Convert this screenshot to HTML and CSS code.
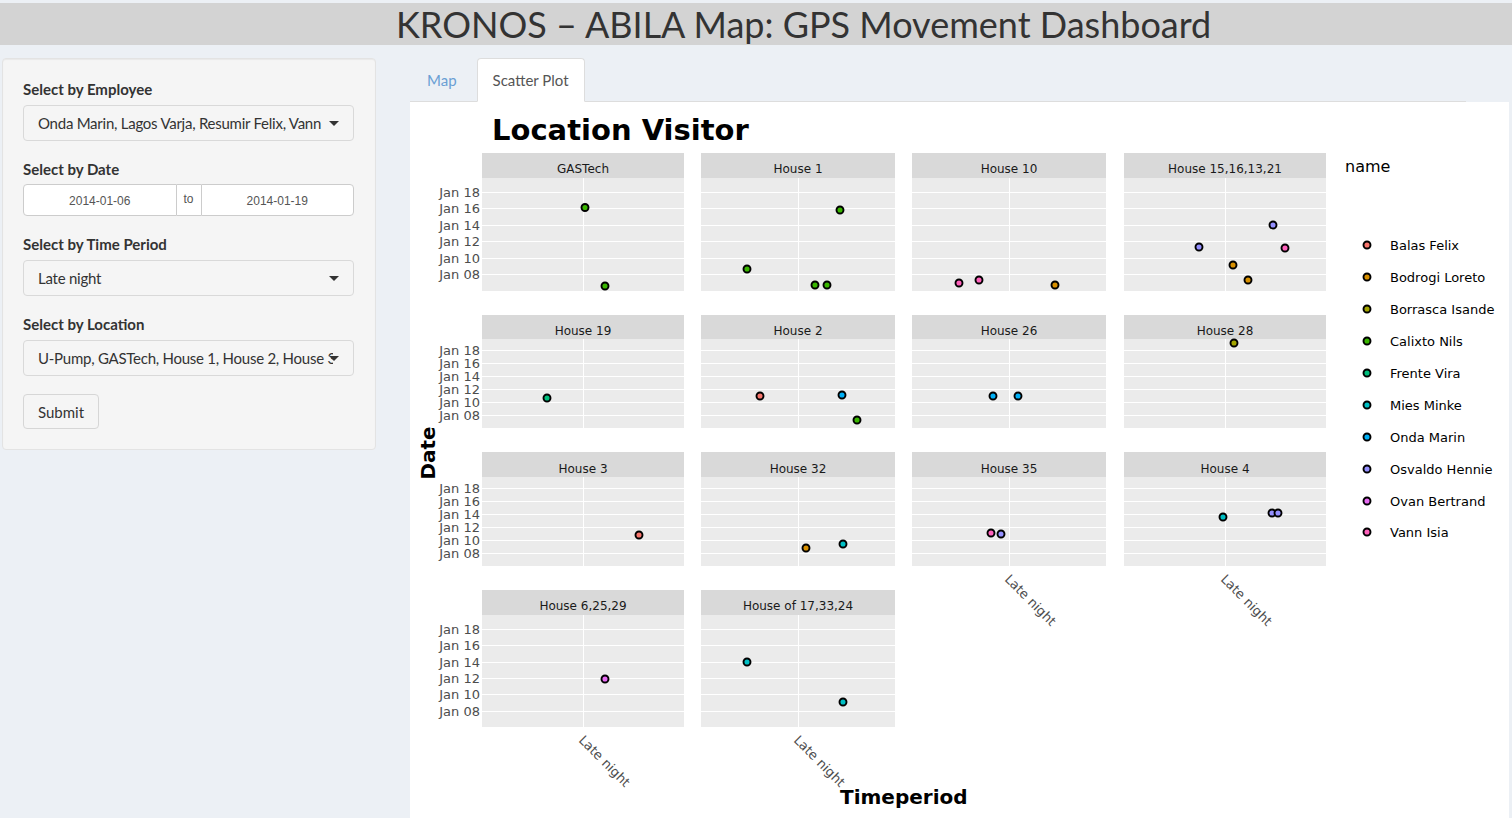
FILE: index.html
```html
<!DOCTYPE html>
<html>
  <head>
    <title>KRONOS – ABILA Map</title>
    <link rel="stylesheet" href="styles.css">
  </head>
  <body>
    <header class="title-bar">
      <h1>KRONOS – ABILA Map: GPS Movement Dashboard</h1>
    </header>

    <div class="layout">
      <aside class="sidebar">
        <div class="field">
          <label>Select by Employee</label>
          <div class="select"><span class="value">Onda Marin, Lagos Varja, Resumir Felix, Vann</span><span class="caret"></span></div>
        </div>
        <div class="field">
          <label class="tight">Select by Date</label>
          <div class="daterange">
            <div class="date first">2014-01-06</div>
            <div class="to">to</div>
            <div class="date last">2014-01-19</div>
          </div>
        </div>
        <div class="field">
          <label>Select by Time Period</label>
          <div class="select"><span class="value">Late night</span><span class="caret"></span></div>
        </div>
        <div class="field">
          <label>Select by Location</label>
          <div class="select"><span class="value">U-Pump, GASTech, House 1, House 2, House 3</span><span class="caret"></span></div>
        </div>
        <button class="submit">Submit</button>
      </aside>

      <main class="main">
        <ul class="tabs">
          <li><a href="#">Map</a></li>
          <li class="active"><a href="#">Scatter Plot</a></li>
        </ul>
        <div class="plot">
          <svg class="chart" width="1099" height="716" viewBox="410 102 1099 716">
            <text class="chart-title" x="492" y="140">Location Visitor</text>

            <!-- facet strips -->
            <g class="strip">
              <rect x="482" y="153" width="202" height="25"/>
              <rect x="701" y="153" width="194" height="25"/>
              <rect x="912" y="153" width="194" height="25"/>
              <rect x="1124" y="153" width="202" height="25"/>
              <rect x="482" y="315" width="202" height="24"/>
              <rect x="701" y="315" width="194" height="24"/>
              <rect x="912" y="315" width="194" height="24"/>
              <rect x="1124" y="315" width="202" height="24"/>
              <rect x="482" y="452" width="202" height="25"/>
              <rect x="701" y="452" width="194" height="25"/>
              <rect x="912" y="452" width="194" height="25"/>
              <rect x="1124" y="452" width="202" height="25"/>
              <rect x="482" y="590" width="202" height="25"/>
              <rect x="701" y="590" width="194" height="25"/>
            </g>

            <!-- panel backgrounds -->
            <g class="panel-bg">
              <rect x="482" y="178" width="202" height="113"/>
              <rect x="701" y="178" width="194" height="113"/>
              <rect x="912" y="178" width="194" height="113"/>
              <rect x="1124" y="178" width="202" height="113"/>
              <rect x="482" y="339" width="202" height="89"/>
              <rect x="701" y="339" width="194" height="89"/>
              <rect x="912" y="339" width="194" height="89"/>
              <rect x="1124" y="339" width="202" height="89"/>
              <rect x="482" y="477" width="202" height="89"/>
              <rect x="701" y="477" width="194" height="89"/>
              <rect x="912" y="477" width="194" height="89"/>
              <rect x="1124" y="477" width="202" height="89"/>
              <rect x="482" y="615" width="202" height="112"/>
              <rect x="701" y="615" width="194" height="112"/>
            </g>

            <!-- grid lines, white on white between panels -->
            <path class="grid" d="M482 192.5H1326M482 208.5H1326M482 225.5H1326M482 241.5H1326M482 258.5H1326M482 274.5H1326
              M583.5 178V291M798.5 178V291M1009.5 178V291M1225.5 178V291
              M482 350.5H1326M482 363.5H1326M482 376.5H1326M482 389.5H1326M482 402.5H1326M482 415.5H1326
              M583.5 339V428M798.5 339V428M1009.5 339V428M1225.5 339V428
              M482 488.5H1326M482 501.5H1326M482 514.5H1326M482 527.5H1326M482 540.5H1326M482 553.5H1326
              M583.5 477V566M798.5 477V566M1009.5 477V566M1225.5 477V566
              M482 629.5H895M482 645.5H895M482 662.5H895M482 678.5H895M482 694.5H895M482 711.5H895
              M583.5 615V727M798.5 615V727"/>

            <g class="strip-text">
              <text x="583" y="173">GASTech</text>
              <text x="798" y="173">House 1</text>
              <text x="1009" y="173">House 10</text>
              <text x="1225" y="173">House 15,16,13,21</text>
              <text x="583" y="335">House 19</text>
              <text x="798" y="335">House 2</text>
              <text x="1009" y="335">House 26</text>
              <text x="1225" y="335">House 28</text>
              <text x="583" y="473">House 3</text>
              <text x="798" y="473">House 32</text>
              <text x="1009" y="473">House 35</text>
              <text x="1225" y="473">House 4</text>
              <text x="583" y="610">House 6,25,29</text>
              <text x="798" y="610">House of 17,33,24</text>
            </g>

            <g class="ytick">
              <text x="480" y="197">Jan 18</text>
              <text x="480" y="213">Jan 16</text>
              <text x="480" y="230">Jan 14</text>
              <text x="480" y="246">Jan 12</text>
              <text x="480" y="263">Jan 10</text>
              <text x="480" y="279">Jan 08</text>
              <text x="480" y="355">Jan 18</text>
              <text x="480" y="368">Jan 16</text>
              <text x="480" y="381">Jan 14</text>
              <text x="480" y="394">Jan 12</text>
              <text x="480" y="407">Jan 10</text>
              <text x="480" y="420">Jan 08</text>
              <text x="480" y="493">Jan 18</text>
              <text x="480" y="506">Jan 16</text>
              <text x="480" y="519">Jan 14</text>
              <text x="480" y="532">Jan 12</text>
              <text x="480" y="545">Jan 10</text>
              <text x="480" y="558">Jan 08</text>
              <text x="480" y="634">Jan 18</text>
              <text x="480" y="650">Jan 16</text>
              <text x="480" y="667">Jan 14</text>
              <text x="480" y="683">Jan 12</text>
              <text x="480" y="699">Jan 10</text>
              <text x="480" y="716">Jan 08</text>
            </g>

            <g class="xtick">
              <text transform="translate(578 741) rotate(45)">Late night</text>
              <text transform="translate(793 741) rotate(45)">Late night</text>
              <text transform="translate(1004 580) rotate(45)">Late night</text>
              <text transform="translate(1220 580) rotate(45)">Late night</text>
            </g>

            <text class="axis-title" transform="translate(435 453) rotate(-90)" text-anchor="middle">Date</text>
            <text class="axis-title" x="840" y="804">Timeperiod</text>

            <g class="points">
              <circle cx="585" cy="207.5" r="3.5" fill="#39B600"/>
              <circle cx="605" cy="286" r="3.5" fill="#39B600"/>
              <circle cx="840" cy="210" r="3.5" fill="#39B600"/>
              <circle cx="747" cy="269" r="3.5" fill="#39B600"/>
              <circle cx="815" cy="285" r="3.5" fill="#39B600"/>
              <circle cx="827" cy="285" r="3.5" fill="#39B600"/>
              <circle cx="959" cy="283" r="3.5" fill="#FF62BC"/>
              <circle cx="979" cy="280" r="3.5" fill="#FF62BC"/>
              <circle cx="1055" cy="285" r="3.5" fill="#D89000"/>
              <circle cx="1273" cy="225" r="3.5" fill="#9590FF"/>
              <circle cx="1199" cy="247" r="3.5" fill="#9590FF"/>
              <circle cx="1285" cy="248" r="3.5" fill="#FF62BC"/>
              <circle cx="1233" cy="265" r="3.5" fill="#D89000"/>
              <circle cx="1248" cy="280" r="3.5" fill="#D89000"/>

              <circle cx="547" cy="398" r="3.5" fill="#00BF7D"/>
              <circle cx="760" cy="396" r="3.5" fill="#F8766D"/>
              <circle cx="842" cy="395" r="3.5" fill="#00B0F6"/>
              <circle cx="857" cy="420" r="3.5" fill="#39B600"/>
              <circle cx="993" cy="396" r="3.5" fill="#00B0F6"/>
              <circle cx="1018" cy="396" r="3.5" fill="#00B0F6"/>
              <circle cx="1234" cy="343" r="3.5" fill="#A3A500"/>

              <circle cx="639" cy="535" r="3.5" fill="#F8766D"/>
              <circle cx="806" cy="548" r="3.5" fill="#D89000"/>
              <circle cx="843" cy="544" r="3.5" fill="#00BFC4"/>
              <circle cx="991" cy="533" r="3.5" fill="#FF62BC"/>
              <circle cx="1001" cy="534" r="3.5" fill="#9590FF"/>
              <circle cx="1223" cy="517" r="3.5" fill="#00BFC4"/>
              <circle cx="1272" cy="513" r="3.5" fill="#9590FF"/>
              <circle cx="1278" cy="513" r="3.5" fill="#9590FF"/>

              <circle cx="605" cy="679" r="3.5" fill="#E76BF3"/>
              <circle cx="747" cy="662" r="3.5" fill="#00BFC4"/>
              <circle cx="843" cy="702" r="3.5" fill="#00BFC4"/>
            </g>

            <!-- legend -->
            <text class="legend-title" x="1345" y="172">name</text>
            <g class="points">
              <circle cx="1367" cy="245" r="3.5" fill="#F8766D"/>
              <circle cx="1367" cy="277" r="3.5" fill="#D89000"/>
              <circle cx="1367" cy="309" r="3.5" fill="#A3A500"/>
              <circle cx="1367" cy="341" r="3.5" fill="#39B600"/>
              <circle cx="1367" cy="373" r="3.5" fill="#00BF7D"/>
              <circle cx="1367" cy="405" r="3.5" fill="#00BFC4"/>
              <circle cx="1367" cy="437" r="3.5" fill="#00B0F6"/>
              <circle cx="1367" cy="469" r="3.5" fill="#9590FF"/>
              <circle cx="1367" cy="501" r="3.5" fill="#E76BF3"/>
              <circle cx="1367" cy="532" r="3.5" fill="#FF62BC"/>
            </g>
            <g class="legend-text">
              <text x="1390" y="250">Balas Felix</text>
              <text x="1390" y="282">Bodrogi Loreto</text>
              <text x="1390" y="314">Borrasca Isande</text>
              <text x="1390" y="346">Calixto Nils</text>
              <text x="1390" y="378">Frente Vira</text>
              <text x="1390" y="410">Mies Minke</text>
              <text x="1390" y="442">Onda Marin</text>
              <text x="1390" y="474">Osvaldo Hennie</text>
              <text x="1390" y="506">Ovan Bertrand</text>
              <text x="1390" y="537">Vann Isia</text>
            </g>
          </svg>
        </div>
      </main>
    </div>
  </body>
</html>
```

FILE: styles.css
```css
* { box-sizing: border-box; }

body {
  margin: 0;
  background: #ecf0f5;
  font-family: Lato, "Open Sans", sans-serif;
  color: #333;
}

.title-bar {
  margin-top: 3px;
  height: 42px;
  background: #d3d3d3;
}

.title-bar h1 {
  margin: 0;
  padding-left: 396px;
  font-size: 36px;
  font-weight: 400;
  line-height: 43px;
  color: #333;
  white-space: nowrap;
}

.layout {
  display: flex;
  align-items: flex-start;
  margin-top: 13px;
}

/* sidebar */
.sidebar {
  width: 374px;
  margin-left: 2px;
  padding: 20px 21px 20px 20px;
  background: #f5f5f5;
  border: 1px solid #e3e3e3;
  border-radius: 4px;
  box-shadow: inset 0 1px 1px rgba(0, 0, 0, .05);
}

.field { margin-bottom: 18px; }

.field label {
  display: block;
  margin-bottom: 6px;
  font-size: 15px;
  font-weight: 700;
  line-height: 20px;
}

.field label.tight { margin-bottom: 5px; }

.select {
  display: flex;
  align-items: center;
  height: 36px;
  padding: 0 14px;
  font-size: 15px;
  letter-spacing: -0.25px;
  background: #f5f5f5;
  border: 1px solid #d9d9d9;
  border-radius: 4px;
}

.select .value {
  flex: 1;
  overflow: hidden;
  white-space: nowrap;
}

.caret {
  position: relative;
  margin-left: -4px;
  border-left: 5px solid transparent;
  border-right: 5px solid transparent;
  border-top: 5px solid #333;
}

.daterange {
  display: flex;
  height: 32px;
  font-family: "Liberation Sans", Arial, sans-serif;
  font-size: 12px;
  color: #555;
}

.date {
  flex: 1;
  line-height: 32px;
  text-align: center;
  background: #fff;
  border: 1px solid #ccc;
}

.date.first { border-radius: 4px 0 0 4px; }
.date.last { border-radius: 0 4px 4px 0; }

.to {
  width: 24px;
  line-height: 29px;
  text-align: center;
  background: #fff;
  border-top: 1px solid #ccc;
  border-bottom: 1px solid #ccc;
}

.submit {
  height: 35px;
  padding: 0 14px;
  font-family: inherit;
  font-size: 15px;
  color: #333;
  background: #f5f5f5;
  border: 1px solid #d6d6d6;
  border-radius: 4px;
}

/* main area */
.main { margin-left: 34px; }

.tabs {
  display: flex;
  gap: 4px;
  width: 1056px;
  margin: 0;
  padding: 0 0 0 1px;
  list-style: none;
  border-bottom: 1px solid #ddd;
}

.tabs li { margin-bottom: -1px; }

.tabs a {
  display: block;
  height: 44px;
  padding: 0 15px;
  line-height: 42px;
  font-size: 15px;
  color: #6a9fd4;
  text-decoration: none;
  border: 1px solid transparent;
  border-radius: 4px 4px 0 0;
}

.tabs .active a {
  color: #555;
  background: #fff;
  border-color: #ddd;
  border-bottom-color: #fff;
}

.plot {
  width: 1099px;
  height: 716px;
  background: #fff;
}

.chart {
  display: block;
  font-family: "DejaVu Sans", Verdana, sans-serif;
}

.chart-title { font-size: 29px; font-weight: 700; fill: #000; }
.strip rect { fill: #d9d9d9; }
.panel-bg rect { fill: #ebebeb; }
.grid { fill: none; stroke: #fff; stroke-width: 1; }
.strip-text text { font-size: 12px; fill: #1a1a1a; text-anchor: middle; }
.ytick text { font-size: 13px; fill: #4d4d4d; text-anchor: end; }
.xtick text { font-size: 13px; fill: #4d4d4d; }
.axis-title { font-size: 20px; font-weight: 700; fill: #000; }
.points circle { stroke: #000; stroke-width: 1.9; }
.legend-title { font-size: 16px; fill: #000; }
.legend-text text { font-size: 13px; fill: #000; }
```
